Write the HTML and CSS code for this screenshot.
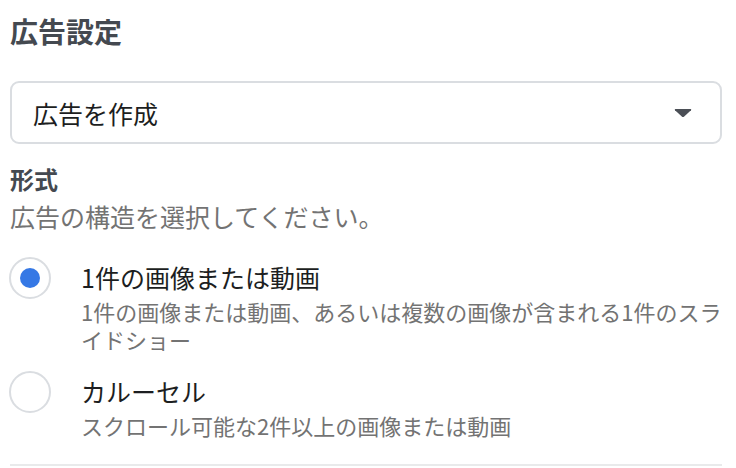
FILE: index.html
```html
<!DOCTYPE html>
<html lang="ja">
<head>
    <meta charset="UTF-8">
    <meta name="viewport" content="width=device-width, initial-scale=1.0">
    <title>広告設定</title>
    <link rel="stylesheet" href="styles.css">
</head>
<body>
    <div class="settings">
        <!-- Header -->
        <h1 class="section-title">広告設定</h1>

        <!-- Dropdown -->
        <div class="select-box">
            <span class="select-value">広告を作成</span>
            <svg class="select-arrow" width="18" height="10" viewBox="0 0 18 10">
                <path d="M1.5 1 H16.5 Q17.8 1 17 2.2 L10.2 8.6 Q9 9.6 7.8 8.6 L1 2.2 Q0.2 1 1.5 1 Z" fill="#4b4f56"/>
            </svg>
        </div>

        <!-- Format -->
        <h2 class="field-label">形式</h2>
        <p class="field-help">広告の構造を選択してください。</p>

        <div class="options">
            <div class="option">
                <span class="radio checked"></span>
                <div class="option-text">
                    <div class="option-title">1件の画像または動画</div>
                    <div class="option-desc">1件の画像または動画、あるいは複数の画像が含まれる1件のスライドショー</div>
                </div>
            </div>
            <div class="option">
                <span class="radio"></span>
                <div class="option-text">
                    <div class="option-title">カルーセル</div>
                    <div class="option-desc">スクロール可能な2件以上の画像または動画</div>
                </div>
            </div>
        </div>

        <div class="divider"></div>
    </div>
</body>
</html>
```

FILE: styles.css
```css
/* Base */
* {
    margin: 0;
    padding: 0;
    box-sizing: border-box;
}

body {
    background-color: #fff;
    color: #1c1e21;
    font-family: "Noto Sans CJK JP", "Noto Sans", sans-serif;
}

.settings {
    width: 712px;
    margin-left: 10px;
    padding-top: 13px;
}

/* Header */
.section-title {
    font-size: 28px;
    font-weight: bold;
    line-height: 36px;
    color: #444950;
}

/* Dropdown */
.select-box {
    margin-top: 32px;
    height: 63px;
    border: 2px solid #dadde1;
    border-radius: 9px;
    display: flex;
    align-items: center;
    justify-content: space-between;
    padding: 0 28px 0 21px;
}

.select-value {
    font-size: 25px;
    line-height: 30px;
    color: #1c1e21;
}

.select-arrow {
    display: block;
}

/* Format */
.field-label {
    margin-top: 20px;
    font-size: 24px;
    font-weight: bold;
    line-height: 30px;
    color: #444950;
}

.field-help {
    margin-top: 7px;
    font-size: 25px;
    line-height: 30px;
    color: #737373;
}

.options {
    margin-top: 26px;
    display: flex;
    flex-direction: column;
    gap: 18px;
}

.option {
    display: flex;
    align-items: flex-start;
}

.radio {
    flex: none;
    width: 42px;
    height: 42px;
    margin: 0 30px 0 -1px;
    border: 2px solid #dadde1;
    border-radius: 50%;
    display: flex;
    align-items: center;
    justify-content: center;
}

.radio.checked::after {
    content: '';
    width: 20px;
    height: 20px;
    border-radius: 50%;
    background-color: #3578e5;
}

.option-title {
    font-size: 25px;
    line-height: 40px;
    color: #1c1e21;
}

.option-desc {
    font-size: 22px;
    line-height: 28px;
    color: #737373;
}

.divider {
    margin-top: 25px;
    height: 2px;
    background-color: #e9eaeb;
}
```
